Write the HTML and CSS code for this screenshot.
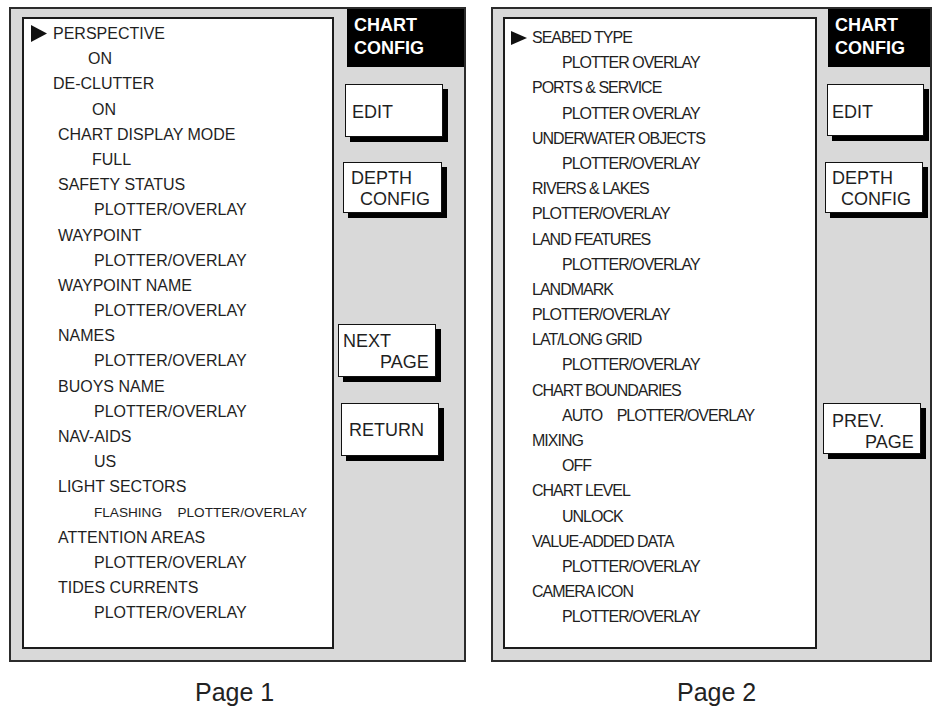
FILE: index.html
```html
<!DOCTYPE html>
<html>
<head>
<meta charset="utf-8">
<title>Chart Config</title>
<link rel="stylesheet" href="styles.css">
</head>
<body>
<div class="sheet">
  <div class="page page1">
    <div class="panel">
      <div class="menu">
        <div class="row cur"><svg class="cursor" viewBox="0 0 16 17" width="16" height="17"><polygon points="0,0 16,8.5 0,17"/></svg>PERSPECTIVE</div>
        <div class="row v-on">ON</div>
        <div class="row lab-a">DE-CLUTTER</div>
        <div class="row v-b">ON</div>
        <div class="row lab">CHART DISPLAY MODE</div>
        <div class="row v-b">FULL</div>
        <div class="row lab">SAFETY STATUS</div>
        <div class="row val">PLOTTER/OVERLAY</div>
        <div class="row lab">WAYPOINT</div>
        <div class="row val">PLOTTER/OVERLAY</div>
        <div class="row lab">WAYPOINT NAME</div>
        <div class="row val">PLOTTER/OVERLAY</div>
        <div class="row lab">NAMES</div>
        <div class="row val">PLOTTER/OVERLAY</div>
        <div class="row lab">BUOYS NAME</div>
        <div class="row val">PLOTTER/OVERLAY</div>
        <div class="row lab">NAV-AIDS</div>
        <div class="row val">US</div>
        <div class="row lab">LIGHT SECTORS</div>
        <div class="row val small"><span>FLASHING</span><span class="second">PLOTTER/OVERLAY</span></div>
        <div class="row lab">ATTENTION AREAS</div>
        <div class="row val">PLOTTER/OVERLAY</div>
        <div class="row lab">TIDES CURRENTS</div>
        <div class="row val">PLOTTER/OVERLAY</div>
      </div>
      <div class="side">
        <div class="title">CHART<br>CONFIG</div>
        <div class="btn b-edit"><span class="ln">EDIT</span></div>
        <div class="btn b-depth"><span class="ln">DEPTH</span><span class="ln ind">CONFIG</span></div>
        <div class="btn b-next"><span class="ln">NEXT</span><span class="ln ind">PAGE</span></div>
        <div class="btn b-return"><span class="ln">RETURN</span></div>
      </div>
    </div>
    <div class="cap">Page 1</div>
  </div>

  <div class="page page2">
    <div class="panel">
      <div class="menu">
        <div class="row cur"><svg class="cursor" viewBox="0 0 16 14" width="16" height="14"><polygon points="0,0 16,7 0,14"/></svg>SEABED TYPE</div>
        <div class="row val">PLOTTER OVERLAY</div>
        <div class="row lab">PORTS &amp; SERVICE</div>
        <div class="row val">PLOTTER OVERLAY</div>
        <div class="row lab">UNDERWATER OBJECTS</div>
        <div class="row val">PLOTTER/OVERLAY</div>
        <div class="row lab">RIVERS &amp; LAKES</div>
        <div class="row lab">PLOTTER/OVERLAY</div>
        <div class="row lab">LAND FEATURES</div>
        <div class="row val">PLOTTER/OVERLAY</div>
        <div class="row lab">LANDMARK</div>
        <div class="row lab">PLOTTER/OVERLAY</div>
        <div class="row lab">LAT/LONG GRID</div>
        <div class="row val">PLOTTER/OVERLAY</div>
        <div class="row lab">CHART BOUNDARIES</div>
        <div class="row val"><span>AUTO</span><span class="second">PLOTTER/OVERLAY</span></div>
        <div class="row lab">MIXING</div>
        <div class="row val">OFF</div>
        <div class="row lab">CHART LEVEL</div>
        <div class="row val">UNLOCK</div>
        <div class="row lab">VALUE-ADDED DATA</div>
        <div class="row val">PLOTTER/OVERLAY</div>
        <div class="row lab">CAMERA ICON</div>
        <div class="row val">PLOTTER/OVERLAY</div>
      </div>
      <div class="side">
        <div class="title">CHART<br>CONFIG</div>
        <div class="btn b-edit"><span class="ln">EDIT</span></div>
        <div class="btn b-depth"><span class="ln">DEPTH</span><span class="ln ind">CONFIG</span></div>
        <div class="btn b-prev"><span class="ln">PREV.</span><span class="ln ind">PAGE</span></div>
      </div>
    </div>
    <div class="cap">Page 2</div>
  </div>
</div>
</body>
</html>
```

FILE: styles.css
```css
* { box-sizing: border-box; }

body {
  margin: 0;
  font-family: "Liberation Sans", Arial, Helvetica, sans-serif;
  color: #1f1f1f;
  background: #fff;
}

.sheet {
  display: flex;
  padding-top: 7px;
}

.page {
  display: flex;
  flex-direction: column;
}

.page1 { margin-left: 9px; width: 457px; }
.page2 { margin-left: 25px; width: 441px; }

.panel {
  display: flex;
  height: 655px;
  border: 2px solid #2c2c2c;
  background: #d9d9d9;
}

.menu {
  flex: none;
  height: 632px;
  margin: 8px 0 0 11px;
  border: 2px solid #1c1c1c;
  background: #fff;
  font-size: 16px;
  line-height: 25.2px;
}

.page1 .menu { width: 312px; padding-top: 2px; }
.page2 .menu { width: 314px; margin-left: 10px; padding-top: 6px; letter-spacing: -1px; }

.row {
  display: flex;
  align-items: center;
  height: 25.2px;
  white-space: nowrap;
}

.cursor { flex: none; fill: #111; }

.page1 .cur { padding-left: 7px; }
.page1 .cur .cursor { margin-right: 6px; }
.page1 .v-on { padding-left: 64px; }
.page1 .lab-a { padding-left: 29px; }
.page1 .v-b { padding-left: 68px; }
.page1 .lab { padding-left: 34px; }
.page1 .val { padding-left: 70px; }
.page1 .small { font-size: 13.6px; }
.page1 .small .second { margin-left: 15.5px; }

.page2 .cur { padding-left: 6px; }
.page2 .cur .cursor { margin-right: 5px; }
.page2 .lab { padding-left: 27px; }
.page2 .val { padding-left: 57px; }
.page2 .val .second { margin-left: 14.5px; }

.side {
  flex: 1;
  display: flex;
  flex-direction: column;
  align-items: flex-start;
}

.title {
  height: 58px;
  padding: 5px 0 0 7px;
  background: #000;
  color: #fff;
  font-size: 18px;
  font-weight: bold;
  line-height: 23px;
}

.page1 .title { margin-left: 13px; width: 117px; }
.page2 .title { margin-left: 11px; width: 102px; }

.btn {
  display: flex;
  flex-direction: column;
  background: #fff;
  border: 1px solid #111;
  box-shadow: 5px 5px 0 #000;
  font-size: 18px;
  line-height: 21px;
  color: #1f1f1f;
  white-space: nowrap;
}

.ln { display: block; }

/* page 1 buttons */
.page1 .b-edit   { margin: 17px 0 0 11px; width: 98px; height: 53px; padding: 17px 0 0 6px; }
.page1 .b-depth  { margin: 25px 0 0 9px;  width: 99px; height: 51px; padding: 5px 0 0 7px; }
.page1 .b-depth .ind { margin-left: 9px; }
.page1 .b-next   { margin: 111px 0 0 4px; width: 98px; height: 53px; padding: 6px 0 0 4px; }
.page1 .b-next .ind { margin-left: 37px; }
.page1 .b-return { margin: 26px 0 0 7px;  width: 98px; height: 53px; padding: 16px 0 0 7px; }

/* page 2 buttons */
.page2 .b-edit  { margin: 17px 0 0 10px; width: 97px; height: 52px; padding: 17px 0 0 4px; }
.page2 .b-depth { margin: 26px 0 0 8px;  width: 98px; height: 51px; padding: 5px 0 0 6px; }
.page2 .b-depth .ind { margin-left: 9px; }
.page2 .b-prev  { margin: 190px 0 0 6px; width: 98px; height: 51px; padding: 7px 0 0 8px; }
.page2 .b-prev .ind { margin-left: 33px; }

.cap {
  margin-top: 16px;
  padding-left: 186px;
  font-size: 25px;
  line-height: 28px;
  color: #222;
  white-space: nowrap;
}
```
